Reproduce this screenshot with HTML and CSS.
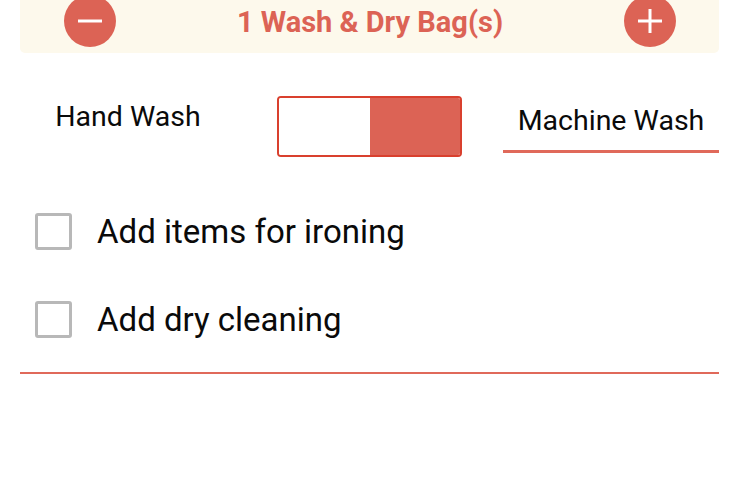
FILE: index.html
```html
<!DOCTYPE html>
<html>

<head>
	<meta charset="utf-8">
	<title>Wash &amp; Dry</title>
	<link rel="stylesheet" href="styles.css">
</head>

<body>
	<div class="page">
		<div class="bag-bar">
			<button class="round-btn" aria-label="remove bag">
				<svg width="26" height="26" viewBox="0 0 26 26"><path d="M1 13h24" stroke="#fff" stroke-width="3"/></svg>
			</button>
			<span class="bag-title">1 Wash &amp; Dry Bag(s)</span>
			<button class="round-btn" aria-label="add bag">
				<svg width="26" height="26" viewBox="0 0 26 26"><path d="M1 13h24M13 1v24" stroke="#fff" stroke-width="3"/></svg>
			</button>
		</div>

		<div class="wash-row">
			<div class="wash-opt">Hand Wash</div>
			<div class="switch">
				<span class="switch-off"></span>
				<span class="switch-on"></span>
			</div>
			<div class="wash-opt wash-opt-active">Machine Wash</div>
		</div>

		<label class="extra">
			<span class="box"></span>
			Add items for ironing
		</label>
		<label class="extra">
			<span class="box"></span>
			Add dry cleaning
		</label>

		<div class="rule"></div>
	</div>
</body>

</html>
```

FILE: styles.css
```css
body {
	margin: 0;
	background: #fff;
	font-family: Roboto, "Liberation Sans", sans-serif;
	color: #0a0a0a;
}

.page {
	margin-top: -6px;
	padding: 0 21px 0 20px;
}

.bag-bar {
	height: 53px;
	padding: 0 43px 6px 44px;
	display: flex;
	align-items: center;
	justify-content: space-between;
	background: #fdf9ec;
	border-radius: 0 0 5px 5px;
}

.round-btn {
	width: 52px;
	height: 52px;
	border: none;
	border-radius: 50%;
	background: #dc6355;
	padding: 0;
	display: flex;
	align-items: center;
	justify-content: center;
}

.bag-title {
	color: #dc6355;
	font-size: 29px;
	font-weight: bold;
	margin-top: 3px;
}

.wash-row {
	margin-top: 43px;
	display: flex;
	justify-content: space-between;
	align-items: flex-start;
}

.wash-opt {
	width: 216px;
	text-align: center;
	font-size: 28.5px;
	line-height: 30px;
	margin-top: 6px;
}

.wash-opt-active {
	margin-top: 10px;
	padding-bottom: 14px;
	border-bottom: 3px solid #e0695a;
}

.switch {
	width: 181px;
	height: 57px;
	display: flex;
	border: 2px solid #d9402e;
	border-radius: 4px;
	overflow: hidden;
}

.switch-off {
	flex: 1;
	background: #fff;
}

.switch-on {
	flex: 1;
	background: #dc6355;
}

.extra {
	display: flex;
	align-items: center;
	gap: 25px;
	font-size: 33px;
	padding-left: 15px;
	height: 37px;
}

.extra:first-of-type {
	margin-top: 56px;
}

.extra + .extra {
	margin-top: 51px;
}

.box {
	width: 31px;
	height: 31px;
	border: 3px solid #b8b8b8;
	border-radius: 3px;
}

.rule {
	margin-top: 34px;
	border-top: 2px solid #e0695a;
}
```
